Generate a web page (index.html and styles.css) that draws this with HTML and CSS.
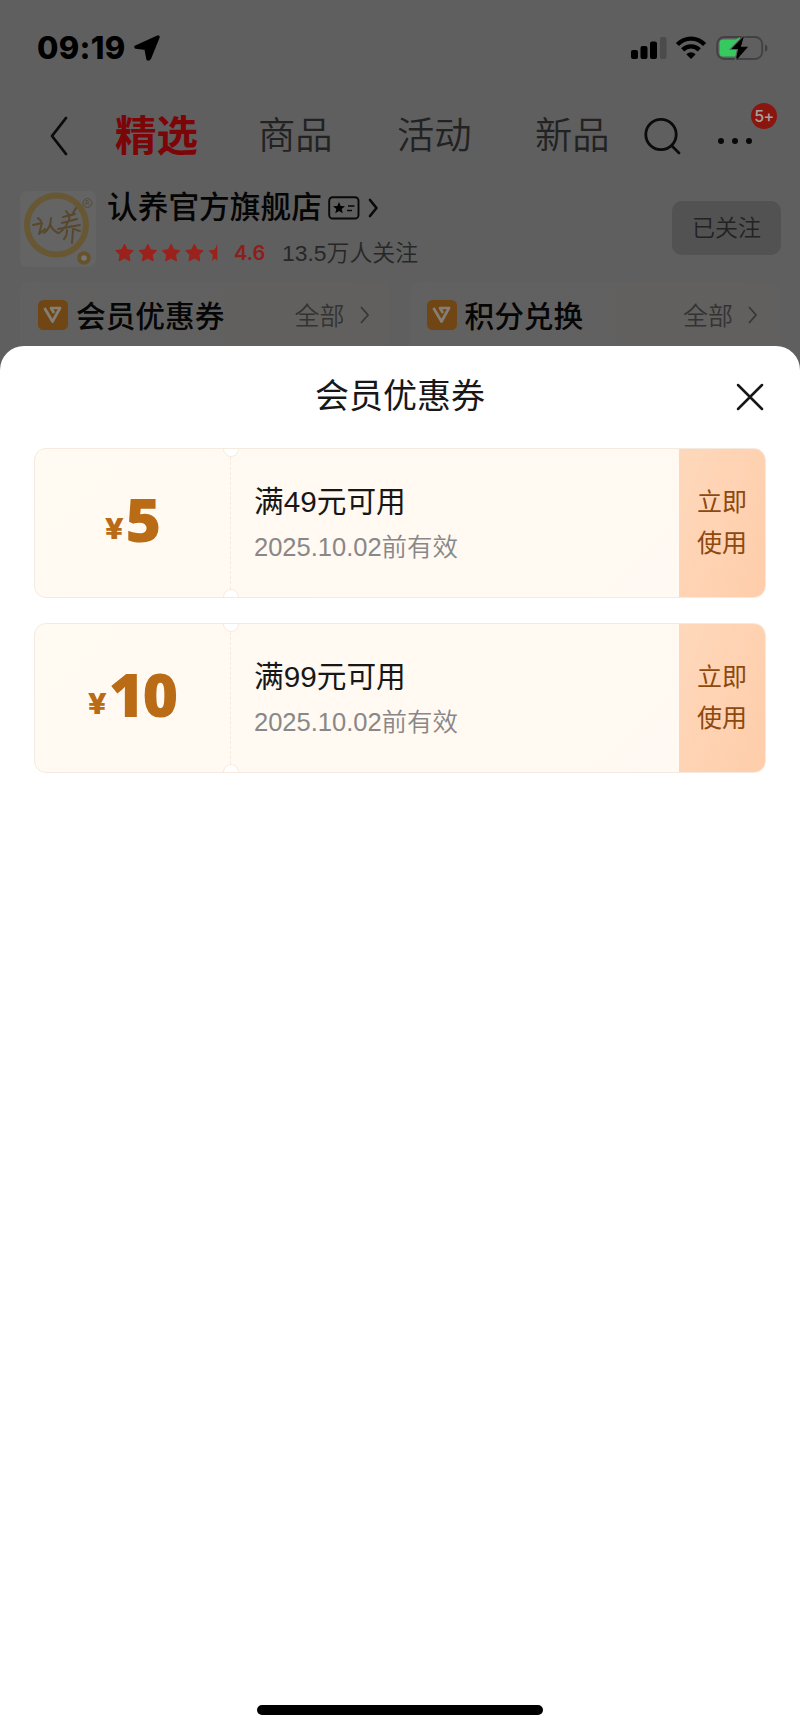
FILE: index.html
```html
<!DOCTYPE html>
<html lang="zh-CN">
<head>
<meta charset="utf-8">
<title>会员优惠券</title>
<link rel="stylesheet" href="styles.css">
</head>
<body>
<div class="screen">
  <header class="status">
    <span class="time">09:19</span>
    <svg class="location" width="26" height="26" viewBox="0 0 26 26"><path d="M24 2 2 12 12 13.400 14 24Q15 24 15.500 23Z" fill="#000" stroke="#000" stroke-width="3.400" stroke-linejoin="round"/></svg>
    <svg class="signal" width="37" height="24" viewBox="0 0 37 24"><g fill="#000"><rect x="1" y="14" width="7" height="9" rx="2"/><rect x="10.500" y="10" width="7" height="13" rx="2"/><rect x="20" y="5.500" width="7" height="17.500" rx="2"/></g><rect x="30" y="1" width="6.500" height="22" rx="2" fill="#4b4b4b"/></svg>
    <svg class="wifi" width="32" height="24" viewBox="0 0 32 24"><g fill="none" stroke="#000" stroke-width="4.400"><path d="M2.400 8.500C10 .6 22 .6 29.600 8.500"/><path d="M7.700 13.900C12.400 9.200 19.600 9.200 24.300 13.900"/></g><path d="M11.300 18.300Q16 14.300 20.700 18.300L16 23Z"/></svg>
    <svg class="battery" width="52" height="26" viewBox="0 0 52 26"><rect x="1.200" y="2" width="45" height="22" rx="7" fill="none" stroke="#414141" stroke-width="1.800"/><path d="M7 4.500H20L24 2 20 21.500H7Q3.500 21.500 3.500 18V8Q3.500 4.500 7 4.500Z" fill="#36c95f"/><path d="M28 .5 14.500 14.200H21.500L19 25.500 33 11.300H25.500Z" fill="#000" stroke="#5f5f5f" stroke-width="1.200"/><path d="M28 1 15.500 14H23L20.500 25 32 11.800H24.700Z"/><path d="M49 9.500Q51.500 10 51.500 13T49 16.500Z" fill="#414141"/></svg>
  </header>

  <nav class="nav">
    <svg class="back" width="20" height="40" viewBox="0 0 20 40"><path d="M17 2 3 20 17 38" fill="none" stroke="#0b0b0b" stroke-width="2.800" stroke-linecap="round" stroke-linejoin="round"/></svg>
    <span class="tab tab-active">精选</span>
    <span class="tab tab-goods">商品</span>
    <span class="tab tab-events">活动</span>
    <span class="tab tab-new">新品</span>
    <svg class="search" width="38" height="38" viewBox="0 0 38 38"><g fill="none" stroke="#0b0b0b" stroke-width="2.800" stroke-linecap="round"><circle cx="17" cy="17.500" r="15.200"/><path d="m28 29 7 7"/></g></svg>
    <div class="more">
      <i class="dot"></i><i class="dot"></i><i class="dot"></i>
      <span class="badge">5+</span>
    </div>
  </nav>

  <section class="store">
    <svg class="logo" width="76" height="76" viewBox="0 0 76 76">
      <rect width="76" height="76" rx="7" fill="#646464"/>
      <circle cx="36.500" cy="34" r="29.500" fill="none" stroke="#685733" stroke-width="6"/>
      <g fill="none" stroke="#57482b" stroke-width="2" stroke-linecap="round" stroke-linejoin="round">
        <path d="m18 27 3 3M13 34l9-2-3 11 6-5M31 27c0 7-3 12-7 15M30 32c1 5 4 8 8 10"/>
        <path d="m46 20 3 4M56 17l-4 7M43 26l12-3M42 32l15-4M38 38l22-4M50 24c-1 8-4 13-11 18M51 35c2 3 5 4 9 5M47 39c0 4-1 7-3 9M53 39l-1 13"/>
      </g>
      <circle cx="67.500" cy="12" r="4.500" fill="none" stroke="#544b39"/><path d="M66 14.500v-5h2q2 1 0 2.500h-2m1.500 0 2 2.500" fill="none" stroke="#544b39" stroke-width=".8"/>
      <circle cx="64" cy="67" r="4.800" fill="#777" stroke="#67532b" stroke-width="4"/>
    </svg>
    <div class="store-info">
      <div class="store-line">
        <span class="store-name">认养官方旗舰店</span>
        <svg class="member-card" width="32" height="24" viewBox="0 0 32 24"><rect x="1.200" y="1.200" width="29.300" height="21.300" rx="3.500" fill="none" stroke="#090909" stroke-width="1.900"/><path d="m11 6 1.700 4 4.300.3-3.300 2.800 1 4.200L11 15l-3.700 2.300 1-4.200L5 10.300 9.300 10Z"/><path d="M20 10h6.500M19 14.500h5" stroke="#090909" stroke-width="1.600"/></svg>
        <svg class="store-arrow" width="11" height="20" viewBox="0 0 11 20"><path d="m2 2 6.500 8L2 18" fill="none" stroke="#090909" stroke-width="2.600" stroke-linecap="round" stroke-linejoin="round"/></svg>
      </div>
      <div class="rating-line">
        <svg class="stars" width="104" height="20" viewBox="0 0 104 20"><defs><path id="star" d="m9.500 1.200 2.700 5.500 6 .9-4.300 4.300 1 6-5.400-2.800-5.400 2.800 1-6L.8 7.600l6-.9Z" stroke="#9a221b" stroke-linejoin="round"/></defs><g fill="#9a221b"><use href="#star"/><use href="#star" x="23.300"/><use href="#star" x="46.600"/><use href="#star" x="69.900"/><path d="M102.300 1.200v16.500l-2.500-2.300-2.900 2.500 1-6-4.300-4.300 6-.9Z"/></g></svg>
        <span class="score">4.6</span>
        <span class="fans">13.5万人关注</span>
      </div>
    </div>
    <button class="follow">已关注</button>
  </section>

  <section class="panels">
    <div class="panel">
      <svg class="vip" width="30" height="30" viewBox="0 0 30 30"><rect width="30" height="30" rx="5.500" fill="#714615"/><path d="M6.500 8 14.500 21.500 22 8H13l3 5" fill="none" stroke="#858077" stroke-width="2.700" stroke-linejoin="round"/></svg>
      <span class="panel-title">会员优惠券</span><span class="all">全部</span>
      <svg width="11" height="20" viewBox="0 0 11 20"><path d="m2 2 7 8-7 8" fill="none" stroke="#363636" stroke-width="1.700"/></svg>
    </div>
    <div class="panel">
      <svg class="vip" width="30" height="30" viewBox="0 0 30 30"><rect width="30" height="30" rx="5.500" fill="#714615"/><path d="M6.500 8 14.500 21.500 22 8H13l3 5" fill="none" stroke="#858077" stroke-width="2.700" stroke-linejoin="round"/></svg>
      <span class="panel-title">积分兑换</span><span class="all">全部</span>
      <svg width="11" height="20" viewBox="0 0 11 20"><path d="m2 2 7 8-7 8" fill="none" stroke="#363636" stroke-width="1.700"/></svg>
    </div>
  </section>

  <main class="sheet">
    <div class="sheet-head">
      <h1 class="sheet-title">会员优惠券</h1>
      <svg class="close" width="28" height="28" viewBox="0 0 28 28"><path d="m2 2 24 24M26 2 2 26" stroke="#171717" stroke-width="2.500" stroke-linecap="round"/></svg>
    </div>
    <div class="coupons">
      <article class="coupon">
        <div class="price"><span class="yen">¥</span><span class="amount">5</span></div>
        <div class="detail"><div class="rule">满49元可用</div><div class="valid">2025.10.02前有效</div></div>
        <button class="use">立即<br>使用</button>
        <i class="notch notch-top"></i><i class="notch notch-bottom"></i>
      </article>
      <article class="coupon">
        <div class="price"><span class="yen">¥</span><span class="amount">10</span></div>
        <div class="detail"><div class="rule">满99元可用</div><div class="valid">2025.10.02前有效</div></div>
        <button class="use">立即<br>使用</button>
        <i class="notch notch-top"></i><i class="notch notch-bottom"></i>
      </article>
    </div>
    <div class="home-bar"></div>
  </main>
</div>
</body>
</html>
```
FILE: styles.css
```css
* { box-sizing: border-box; }
body { margin: 0; background: #5f5f5f; font-family: "Liberation Sans", "Noto Sans CJK SC", sans-serif; }
svg { display: block; flex: none; }
button { border: 0; padding: 0; margin: 0; font: inherit; }
.screen { width: 800px; height: 1731px; display: flex; flex-direction: column; overflow: hidden; white-space: nowrap; }

.status { height: 96px; padding: 0 32px 0 37px; display: flex; align-items: center; }
.time { width: 88px; font: 800 31px/40px Inter, sans-serif; letter-spacing: .3px; }
.location { margin-left: 9px; }
.signal { margin-left: auto; }
.wifi { margin-left: 8px; }
.battery { margin-left: 9px; }

.nav { height: 82px; padding: 0 0 2px 49px; display: flex; align-items: center; }
.tab { width: 75px; font-size: 37.300px; line-height: 50px; font-weight: 350; color: #222; }
.tab-active { width: 84px; margin: 2px 0 0 46px; font-size: 41.500px; font-weight: 700; color: #7c0508; }
.tab-goods { margin-left: 59px; }
.tab-events { margin-left: 64px; }
.tab-new { margin-left: 63px; }
.search { margin-left: 34px; }
.more { position: relative; margin: 10px 0 0 36px; width: 34px; display: flex; justify-content: space-between; }
.dot { width: 6px; height: 6px; border-radius: 50%; background: #080808; }
.badge { position: absolute; left: 33px; top: -35px; width: 26px; height: 26px; border-radius: 50%; background: #8b160f; color: #aaa19f; font: 500 16px/27px Inter, sans-serif; letter-spacing: -.5px; text-align: center; }

.store { height: 104px; padding: 13px 19px 0 20px; display: flex; align-items: flex-start; }
.store-info { margin-left: 11px; }
.store-line { height: 34px; display: flex; align-items: center; }
.store-name { width: 215px; font-size: 30.700px; line-height: 34px; font-weight: 500; color: #050505; }
.member-card { margin-left: 6px; }
.store-arrow { margin-left: 8px; }
.rating-line { height: 28px; margin-top: 14px; display: flex; align-items: center; }
.stars { margin-left: 8px; }
.score { width: 30px; margin-left: 15px; font: 600 20px/28px Inter, sans-serif; color: #8d1e18; }
.fans { margin-left: 18px; font-size: 22.900px; line-height: 28px; font-weight: 350; color: #272727; }
.follow { width: 109px; height: 54px; margin: 10px 0 0 auto; border-radius: 10px; background: #525252; color: #222; font-size: 23px; line-height: 54px; font-weight: 350; }

.panels { height: 64px; padding: 0 20px; display: flex; gap: 20px; }
.panel { flex: 1; height: 64px; padding: 2px 20px 0 18px; display: flex; align-items: center; border-radius: 10px 10px 0 0; background: linear-gradient(90deg, #626161, #61605f); }
.panel:last-child { padding-left: 17px; padding-right: 22px; }
.panel-title { margin: -2px 0 0 8px; font-size: 29.700px; font-weight: 500; color: #060606; }
.all { margin: -2px 14px 0 auto; font-size: 25px; font-weight: 350; color: #333; }

.sheet { flex: 1; padding: 0 34px 16px; display: flex; flex-direction: column; border-radius: 24px 24px 0 0; background: #fff; }
.sheet-head { height: 102px; display: grid; grid-template-columns: 28px 1fr 28px; align-items: center; }
.sheet-title { grid-column: 2; margin: -2px 0 0; font-size: 34px; line-height: 50px; font-weight: 400; color: #171717; text-align: center; }
.close { margin-left: -2px; }
.coupons { display: flex; flex-direction: column; gap: 25px; }
.coupon { position: relative; height: 150px; display: flex; overflow: hidden; border: 1px solid #f5eadf; border-radius: 12px; background: linear-gradient(135deg, #fffaf2, #fff9f3); }
.price { width: 196px; height: 132px; margin: 8px 0; padding-top: 21px; display: flex; justify-content: center; align-items: baseline; border-right: 1px dashed #f3e9df; color: #b96b16; }
.yen { margin-right: 3px; font: 800 29px/82px Inter, sans-serif; transform: translateY(-3px) scaleX(1.14); }
.amount { font: 800 61px/82px "Open Sans", "Noto Sans", sans-serif; letter-spacing: -2px; }
.detail { padding: 33px 0 0 23px; }
.rule { font-size: 29.700px; line-height: 40px; color: #171717; }
.valid { margin-top: 5px; font-size: 25.500px; line-height: 40px; font-weight: 350; color: #888; }
.use { width: 86px; margin-left: auto; background: linear-gradient(110deg, #fed8bb, #ffcdaa); color: #8d490f; font-size: 25px; line-height: 41px; text-align: center; }
.notch { position: absolute; left: 188px; width: 16px; height: 16px; border: 1px solid #f5eadf; border-radius: 50%; background: #fff; }
.notch-top { top: -8px; }
.notch-bottom { bottom: -8px; }
.home-bar { width: 286px; height: 10px; margin: auto auto 0; border-radius: 5px; background: #000; }
```
